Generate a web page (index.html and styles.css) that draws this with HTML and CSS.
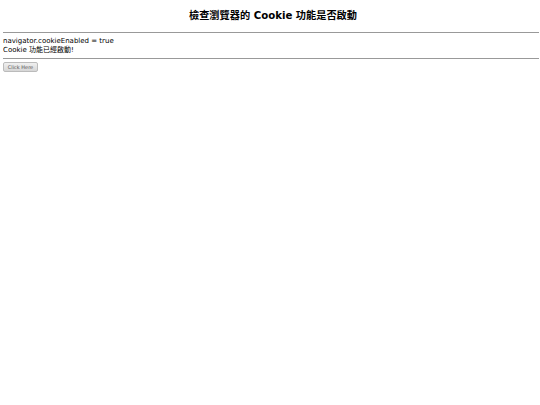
FILE: index.html
```html
<!DOCTYPE html>
<html>
<head>
<meta charset="utf-8">
<link rel="stylesheet" href="styles.css">
</head>
<body>
<h1 class="title">檢查瀏覽器的 Cookie 功能是否啟動</h1>
<hr class="rule">
<div class="result">
<div>navigator.cookieEnabled = true</div>
<div>Cookie 功能已經啟動!</div>
</div>
<hr class="rule">
<button class="btn">Click Here</button>
</body>
</html>
```
FILE: styles.css
```css
html, body { background: #fff; }
body {
  margin: 0 1px 0 3px;
  font-family: "DejaVu Sans", "Noto Sans CJK TC", sans-serif;
  font-size: 7px;
  color: #000;
}
.title {
  margin: 0;
  padding-top: 10px;
  padding-left: 4px;
  text-align: center;
  font-size: 10.2px;
  font-weight: bold;
  line-height: 12px;
  box-sizing: border-box;
  height: 32px;
}
.rule {
  margin: 0;
  border: 0;
  border-top: 1px solid #999;
  height: 0;
}
.result {
  padding: 4px 0 3px;
  line-height: 9px;
}
.btn {
  display: block;
  margin-top: 3px;
  font-family: "DejaVu Sans", sans-serif;
  font-size: 5px;
  height: 10px;
  width: 35px;
  padding: 0;
  border: 1px solid #bbb;
  border-radius: 2px;
  background: linear-gradient(#f0f0f0, #d6d6d6);
  color: #555;
}
```
